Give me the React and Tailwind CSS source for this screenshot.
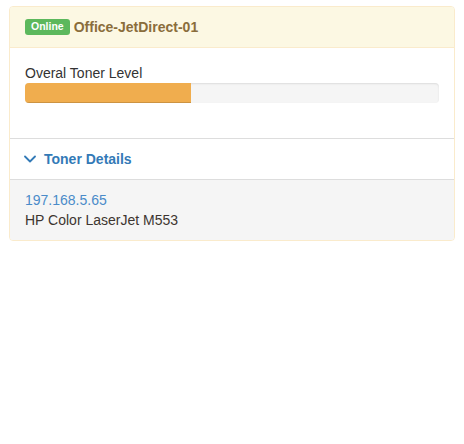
export default function App() {
  return (
    <div className="min-h-[444px] bg-white p-[9px] pt-[6px] font-['Liberation_Sans',Arial,sans-serif] text-[14px] leading-5 text-[#333]">
      <div className="overflow-hidden rounded border border-[#faebcc] bg-white">
        <div className="flex items-center gap-1 border-b border-[#faebcc] bg-[#fcf8e3] px-[15px] py-[10px] text-[#8a6d3b]">
          <span className="rounded-[3px] bg-[#5cb85c] px-[6px] pt-[2px] pb-[3px] text-[10.5px] leading-none font-bold text-white">
            Online
          </span>
          <span className="text-[14px] font-bold">Office-JetDirect-01</span>
        </div>

        <div className="border-b border-[#ddd] px-[15px] pt-[15px] pb-[35px]">
          <div>Overal Toner Level</div>
          <div className="h-5 overflow-hidden rounded bg-[#f5f5f5] shadow-[inset_0_1px_2px_rgba(0,0,0,0.1)]">
            <div className="h-full w-[40%] bg-[#f0ad4e] shadow-[inset_0_-1px_0_rgba(0,0,0,0.15)]" />
          </div>
        </div>

        <div className="flex items-center gap-[8px] border-b border-[#ddd] px-[15px] py-[10px] font-bold text-[#337ab7]">
          <svg width="12" height="8" viewBox="0 0 12 8" fill="none" className="ml-[-1px]">
            <path d="M1 1.5l5 5 5-5" stroke="#337ab7" strokeWidth="1.8" strokeLinecap="round" strokeLinejoin="round" />
          </svg>
          <span>Toner Details</span>
        </div>

        <div className="bg-[#f5f5f5] px-[15px] py-[10px]">
          <div className="text-[#4a8bc9]">197.168.5.65</div>
          <div className="text-[#3d3530]">HP Color LaserJet M553</div>
        </div>
      </div>
    </div>
  );
}
